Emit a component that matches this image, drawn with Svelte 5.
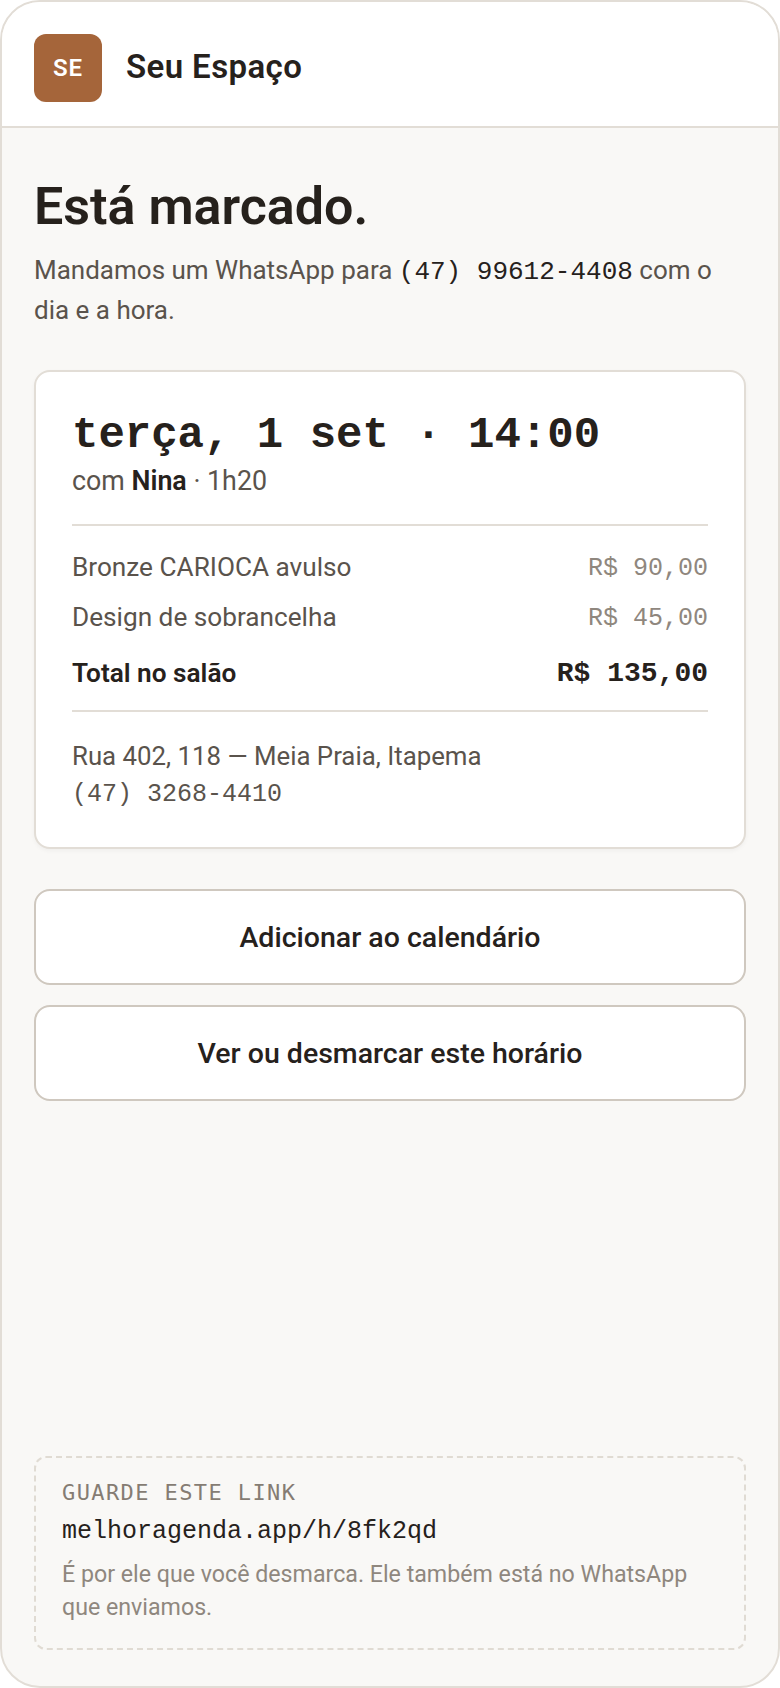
<script>
  const items = [
    { name: "Bronze CARIOCA avulso", price: "R$ 90,00" },
    { name: "Design de sobrancelha", price: "R$ 45,00" }
  ];
</script>

<div class="frame">
  <header class="top">
    <div class="logo">SE</div>
    <div class="brand">Seu Espaço</div>
  </header>

  <main class="content">
    <h1>Está marcado.</h1>
    <p class="lead">
      Mandamos um WhatsApp para <span class="phone">(47) 99612-4408</span> com o dia e a hora.
    </p>

    <section class="card">
      <div class="when">terça, 1 set · 14:00</div>
      <div class="who">com <strong>Nina</strong> · 1h20</div>

      <div class="lines">
        {#each items as item}
          <div class="line">
            <span>{item.name}</span>
            <span class="price">{item.price}</span>
          </div>
        {/each}
        <div class="line total">
          <span>Total no salão</span>
          <span class="price">R$ 135,00</span>
        </div>
      </div>

      <div class="place">
        <div>Rua 402, 118 — Meia Praia, Itapema</div>
        <div class="place-phone">(47) 3268-4410</div>
      </div>
    </section>

    <div class="actions">
      <button>Adicionar ao calendário</button>
      <button>Ver ou desmarcar este horário</button>
    </div>

    <aside class="keep">
      <div class="keep-label">GUARDE ESTE LINK</div>
      <div class="keep-link">melhoragenda.app/h/8fk2qd</div>
      <p>É por ele que você desmarca. Ele também está no WhatsApp que enviamos.</p>
    </aside>
  </main>
</div>

<style>
  :global(body) {
    background: #fff;
  }

  .frame {
    box-sizing: border-box;
    width: 780px;
    height: 1688px;
    display: flex;
    flex-direction: column;
    border: 2px solid #e2ddd6;
    border-radius: 40px;
    overflow: hidden;
    background: #f9f8f6;
    color: #26211c;
    font-family: Roboto, "Noto Sans", sans-serif;
  }

  .top {
    display: flex;
    align-items: center;
    gap: 24px;
    box-sizing: border-box;
    padding: 32px 32px 24px;
    background: #fff;
    border-bottom: 2px solid #e2ddd6;
  }

  .logo {
    width: 68px;
    height: 68px;
    display: flex;
    align-items: center;
    justify-content: center;
    border-radius: 12px;
    background: #a5653a;
    color: #fff;
    font-size: 24px;
    font-weight: 600;
    letter-spacing: 1px;
  }

  .brand {
    margin-bottom: 4px;
    font-size: 33px;
    letter-spacing: 0.4px;
    font-weight: 600;
  }

  .content {
    flex: 1;
    display: flex;
    flex-direction: column;
    padding: 49px 32px 36px;
  }

  h1 {
    margin: 0;
    font-size: 52px;
    line-height: 60px;
    font-weight: 600;
  }

  .lead {
    margin: 14px 0 0;
    font-size: 26px;
    line-height: 38px;
    color: #5a534c;
  }

  .phone {
    font-family: "Liberation Mono", monospace;
    color: #26211c;
  }

  .card {
    margin-top: 41px;
    padding: 38px 36px 33px;
    background: #fff;
    border: 2px solid #e2ddd6;
    border-radius: 16px;
    box-shadow: 0 2px 4px rgba(38, 33, 28, 0.04);
  }

  .when {
    font-family: "Liberation Mono", monospace;
    font-size: 44px;
    line-height: 50px;
    font-weight: 700;
  }

  .who {
    margin-top: 3px;
    font-size: 26.8px;
    line-height: 36px;
    color: #5a534c;
  }

  .who strong {
    color: #26211c;
    font-weight: 600;
  }

  .lines {
    margin-top: 25px;
    padding: 16px 0 9px;
    border-top: 2px solid #e2ddd6;
    border-bottom: 2px solid #e2ddd6;
  }

  .line {
    display: flex;
    justify-content: space-between;
    align-items: center;
    height: 50px;
    font-size: 26.2px;
    color: #5a534c;
  }

  .price {
    padding-top: 2px;
    font-family: "Liberation Mono", monospace;
    font-size: 25px;
    color: #8f877e;
  }

  .total {
    height: 56px;
    margin-top: 3px;
    color: #26211c;
    font-weight: 600;
  }

  .total .price {
    padding-top: 0;
    font-size: 28px;
    font-weight: 700;
    color: #26211c;
  }

  .place {
    margin-top: 25px;
    font-size: 25.8px;
    line-height: 38px;
    color: #5a534c;
  }

  .place-phone {
    margin-top: 1px;
    font-family: "Liberation Mono", monospace;
    font-size: 25px;
  }

  .actions {
    display: flex;
    flex-direction: column;
    gap: 20px;
    margin-top: 40px;
  }

  button {
    height: 96px;
    background: #fff;
    border: 2px solid #cfc8bf;
    border-radius: 16px;
    color: #26211c;
    font-family: inherit;
    font-size: 28.5px;
    font-weight: 500;
  }

  .keep {
    margin-top: auto;
    padding: 20px 26px 24px;
    border: 2px dashed #e0dbd3;
    border-radius: 12px;
  }

  .keep-label {
    font-family: "DejaVu Sans Mono", monospace;
    font-size: 22px;
    line-height: 30px;
    letter-spacing: 1.4px;
    color: #857c73;
  }

  .keep-link {
    margin-top: 7px;
    font-family: "Liberation Mono", monospace;
    font-size: 25px;
    line-height: 34px;
  }

  .keep p {
    margin: 9px 0 0;
    font-size: 23.2px;
    line-height: 33px;
    color: #8f877e;
  }
</style>
